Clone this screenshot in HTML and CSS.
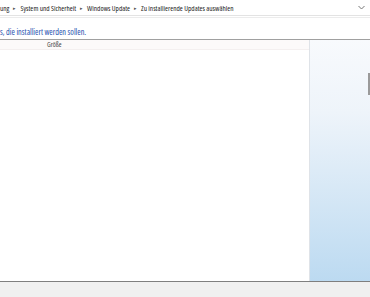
FILE: index.html
```html
<!DOCTYPE html>
<html lang="de">
<head>
    <meta charset="UTF-8">
    <title>Zu installierende Updates auswählen</title>
    <link rel="stylesheet" href="styles.css">
</head>
<body>
    <div class="window">
        <div class="address">
            <div class="crumbs">
                <span>ung</span>
                <span class="sep">&#9656;</span>
                <span>System und Sicherheit</span>
                <span class="sep">&#9656;</span>
                <span>Windows Update</span>
                <span class="sep">&#9656;</span>
                <span>Zu installierende Updates auswählen</span>
            </div>
            <svg class="drop" width="7" height="5" viewBox="0 0 7 5">
                <path d="M0.5 1 L3.5 4 L6.5 1" fill="none" stroke="#777" stroke-width="1"/>
            </svg>
        </div>
        <div class="content">
            <h1 class="title">s, die installiert werden sollen.</h1>
            <div class="panes">
                <div class="list">
                    <div class="list-head">
                        <div class="col col-name"></div>
                        <div class="col col-size">Größe</div>
                    </div>
                </div>
                <div class="details">
                    <div class="scroll"></div>
                </div>
            </div>
        </div>
        <div class="footer"></div>
    </div>
</body>
</html>
```

FILE: styles.css
```css
html, body {
    margin: 0;
    height: 100%;
}

body {
    font-family: "Open Sans", "Noto Sans", sans-serif;
    font-stretch: 85%;
    background: #fff;
    overflow: hidden;
}

.window {
    display: flex;
    flex-direction: column;
    height: 297px;
}

.address {
    display: flex;
    align-items: center;
    height: 15px;
    border-bottom: 1px solid #e3e3e3;
    padding-right: 5px;
}

.crumbs {
    flex: 1;
    display: flex;
    align-items: center;
    gap: 3px;
    font-size: 7.3px;
    color: #222;
    white-space: nowrap;
    overflow: hidden;
}

.sep {
    font-size: 5px;
    color: #555;
    margin: 0 1px;
}

.drop {
    display: block;
}

.content {
    flex: 1;
    display: flex;
    flex-direction: column;
    border-top: 1px solid #ececec;
    margin-top: 1px;
}

.title {
    margin: 0;
    padding: 7px 0 0 0;
    height: 14px;
    font-size: 8.2px;
    font-stretch: 78%;
    font-weight: normal;
    color: #1e4fae;
    line-height: 14px;
    white-space: nowrap;
}

.panes {
    flex: 1;
    display: flex;
    border-top: 1px solid #a0a0a0;
}

.list {
    flex: 1;
    background: #fff;
}

.list-head {
    display: flex;
    height: 9px;
    background: #fcfafa;
    border-bottom: 1px solid #f4f0f0;
}

.col {
    font-size: 6.8px;
    color: #444;
    line-height: 9px;
}

.col-name {
    width: 46px;
}

.col-size {
    padding-left: 1px;
}

.details {
    width: 60px;
    border-left: 1px solid #dfe3e8;
    background: linear-gradient(#f8fafd, #eef4fa 30%, #bcdaf1);
    position: relative;
}

.scroll {
    position: absolute;
    right: 0;
    top: 33px;
    width: 2px;
    height: 22px;
    background: #9a9a9a;
}

.footer {
    height: 15px;
    border-top: 1px solid #7f7f7f;
    background: #f0f0f0;
}
```
